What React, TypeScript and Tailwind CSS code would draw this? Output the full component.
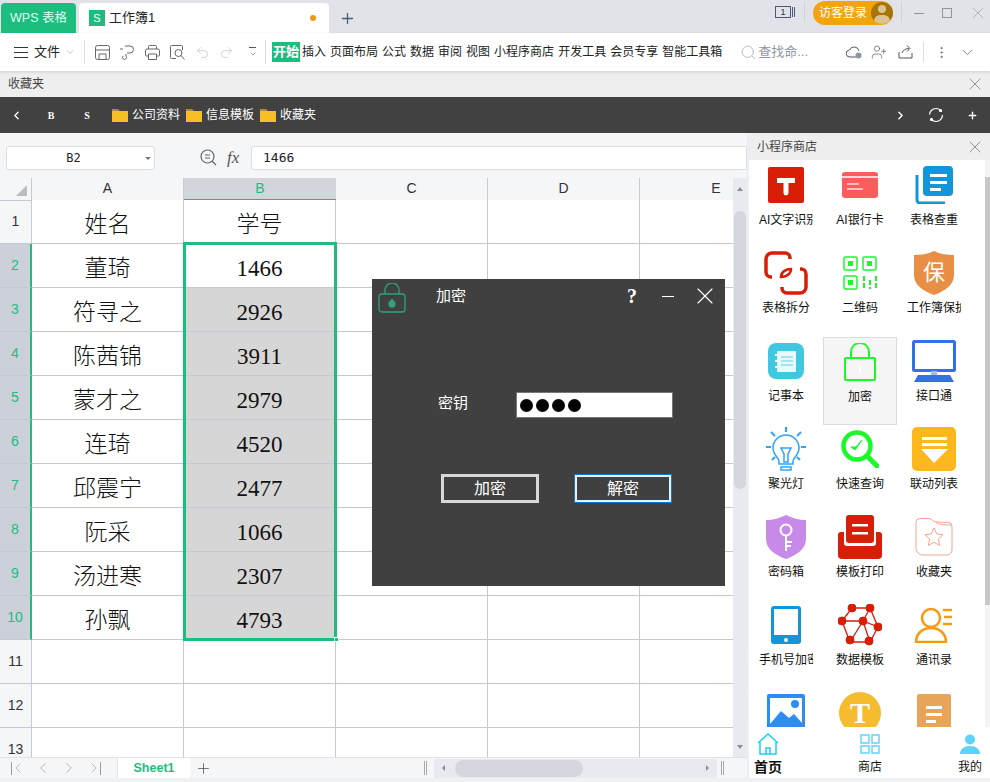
import { ChevronDown, ChevronLeft, ChevronRight, Plus, Redo2, Search, Undo2, X, MoreVertical, UserPlus } from 'lucide-react';

const ribbonTabs = ['插入', '页面布局', '公式', '数据', '审阅', '视图', '小程序商店', '开发工具', '会员专享', '智能工具箱'];

const students = [
  ['姓名', '学号'],
  ['董琦', '1466'],
  ['符寻之', '2926'],
  ['陈茜锦', '3911'],
  ['蒙才之', '2979'],
  ['连琦', '4520'],
  ['邱震宁', '2477'],
  ['阮采', '1066'],
  ['汤进寒', '2307'],
  ['孙飘', '4793'],
  ['', ''],
  ['', ''],
  ['', ''],
];

const Folder = () => (
  <svg width="16" height="14" viewBox="0 0 16 14">
    <path d="M0 1h6l2 2h8v2H0z" fill="#a88c3a" />
    <path d="M0 3h16v11H0z" fill="#f6bf26" />
  </svg>
);

const apps: { label: string; icon: React.ReactNode }[] = [
  {
    label: 'AI文字识别',
    icon: (
      <svg width="36" height="36" viewBox="0 0 36 36">
        <rect width="36" height="36" rx="2" fill="#d81e06" />
        <path d="M9 11h18v5h-6.500v10a2.500 2.500 0 0 1-5 0V16H9z" fill="#fff" />
      </svg>
    ),
  },
  {
    label: 'AI银行卡',
    icon: (
      <svg width="36" height="28" viewBox="0 0 36 28">
        <rect width="36" height="26" y="1" rx="3" fill="#fd5c5c" />
        <path d="M0 6h36" stroke="#fff" strokeWidth="1.500" />
        <path d="M5 13h12M5 18h16" stroke="#fff" strokeWidth="1.500" opacity=".8" />
      </svg>
    ),
  },
  {
    label: '表格查重',
    icon: (
      <svg width="38" height="38" viewBox="0 0 38 38">
        <path d="M2 9v25a3 3 0 0 0 3 3h25" fill="none" stroke="#1296db" strokeWidth="3" />
        <rect x="8" y="0" width="30" height="30" rx="4" fill="#1296db" />
        <path d="M15 8h17v3H15zM15 15h17v3H15zM15 22h11v3H15z" fill="#fff" />
      </svg>
    ),
  },
  {
    label: '表格拆分',
    icon: (
      <svg width="44" height="44" viewBox="0 0 44 44" fill="none" stroke="#d81e06" strokeWidth="3.500">
        <path d="M26 8V7a5 5 0 0 0-5-5H8a6 6 0 0 0-6 6v13a5 5 0 0 0 5 5h1" />
        <path d="M18 36v1a5 5 0 0 0 5 5h13a6 6 0 0 0 6-6V23a5 5 0 0 0-5-5h-1" />
        <path d="M17 26c0-5 5-8 10-8 0 5-5 8-10 8z" strokeWidth="2.500" />
      </svg>
    ),
  },
  {
    label: '二维码',
    icon: (
      <svg width="34" height="34" viewBox="0 0 34 34" fill="none" stroke="#1afa29" strokeWidth="1.500">
        <rect x="1" y="1" width="13" height="13" rx="1.500" />
        <rect x="20" y="1" width="13" height="13" rx="1.500" />
        <rect x="1" y="20" width="13" height="13" rx="1.500" />
        <path d="M5 5h5v5H5zM24 5h5v5h-5zM5 24h5v5H5z" fill="#1afa29" stroke="none" />
        <path d="M21 20v13M27 24v9M33 20v13" strokeWidth="2" strokeDasharray="5 2" />
      </svg>
    ),
  },
  {
    label: '工作簿保护',
    icon: (
      <div className="relative flex h-[44px] w-[40px] items-center justify-center">
        <svg width="40" height="44" viewBox="0 0 40 44" className="absolute inset-0">
          <path d="M20 0c6 3 13 4 20 4v20c0 10-9 16-20 20C9 40 0 34 0 24V4c7 0 14-1 20-4z" fill="#e98f45" />
        </svg>
        <span className="relative text-[22px] leading-none text-[#fff]">保</span>
      </div>
    ),
  },
  {
    label: '记事本',
    icon: (
      <svg width="36" height="36" viewBox="0 0 36 36">
        <rect width="36" height="36" rx="8" fill="#3fc8e0" />
        <rect x="9" y="8" width="19" height="21" rx="1" fill="#e9fafd" />
        <path d="M7 12h3M7 18h3M7 24h3" stroke="#e9fafd" strokeWidth="2" />
        <path d="M13 14h12M13 18h12M13 22h12" stroke="#8fdeeb" strokeWidth="1.500" />
      </svg>
    ),
  },
  {
    label: '加密',
    icon: (
      <svg width="32" height="38" viewBox="0 0 32 38" fill="none" stroke="#1afa29" strokeWidth="2">
        <path d="M7 14V9a9 9 0 0 1 18 0v5" />
        <rect x="1" y="15" width="30" height="22" rx="1" />
        <path d="M16 22v7" stroke="#fff" />
      </svg>
    ),
  },
  {
    label: '接口通',
    icon: (
      <svg width="44" height="42" viewBox="0 0 44 42">
        <rect x="1.500" y="1.500" width="41" height="29" rx="1" fill="#fff" stroke="#3370e8" strokeWidth="3" />
        <path d="M19 31h6v4h-6z" fill="#9fbdf2" />
        <path d="M6 35h32l4 7H2z" fill="#3370e8" />
      </svg>
    ),
  },
  {
    label: '聚光灯',
    icon: (
      <svg width="40" height="44" viewBox="0 0 40 44" fill="none" stroke="#2aa5fb" strokeWidth="1.500">
        <path d="M13 37v-3c0-3-6-6-6-13a13 13 0 0 1 26 0c0 7-6 10-6 13v3z" />
        <path d="M15 21h10l-3 6v8h-4v-8z" strokeWidth="1.500" />
        <path d="M15 40h10v3H15z" />
        <path d="M20 0v5M5 5l4 4M35 5l-4 4M0 20h5M35 20h5M6 33l3-3M34 33l-3-3" strokeWidth="2" />
      </svg>
    ),
  },
  {
    label: '快速查询',
    icon: (
      <svg width="38" height="38" viewBox="0 0 38 38" fill="none" stroke="#1afa29">
        <circle cx="16" cy="16" r="13.500" strokeWidth="4.500" />
        <path d="M27 27l9 9" strokeWidth="5" strokeLinecap="round" />
        <path d="M10 17l4 3 7-10-6 7z" strokeWidth="1" fill="#1afa29" />
      </svg>
    ),
  },
  {
    label: '联动列表',
    icon: (
      <svg width="44" height="44" viewBox="0 0 44 44">
        <rect width="44" height="44" rx="5" fill="#fdb81e" />
        <path d="M10 10h25v3H10zM10 16h25v3H10z" fill="#fff" />
        <path d="M9 22h27L22 36z" fill="#fff" />
      </svg>
    ),
  },
  {
    label: '密码箱',
    icon: (
      <svg width="40" height="44" viewBox="0 0 40 44">
        <path d="M20 0c6 3 13 5 20 5v19c0 10-9 16-20 20C9 40 0 34 0 24V5c7 0 14-2 20-5z" fill="#c88ae8" />
        <circle cx="20" cy="15" r="5.500" fill="none" stroke="#fff" strokeWidth="2" />
        <path d="M20 21v15M20 27h6M20 31h5" stroke="#fff" strokeWidth="2" fill="none" />
      </svg>
    ),
  },
  {
    label: '模板打印',
    icon: (
      <svg width="44" height="44" viewBox="0 0 44 44">
        <path d="M3 17h3v11a3 3 0 0 0 3 3h26a3 3 0 0 0 3-3V17h3a3 3 0 0 1 3 3v20a4 4 0 0 1-4 4H4a4 4 0 0 1-4-4V20a3 3 0 0 1 3-3z" fill="#d81e06" />
        <rect x="8" y="0" width="28" height="28" rx="3" fill="#d81e06" />
        <path d="M14 9h16v2.500H14zM14 17h16v2.500H14z" fill="#fff" />
      </svg>
    ),
  },
  {
    label: '收藏夹',
    icon: (
      <svg width="38" height="38" viewBox="0 0 38 38" fill="none" stroke="#f59a85" strokeWidth="0.900">
        <path d="M5 .500h9c3 0 3 3 7 3.500l12 .500a4 4 0 0 1 4 4V32a5 5 0 0 1-5 5H8a7 7 0 0 1-7-7V4.500a4 4 0 0 1 4-4z" />
        <path d="M21 4c3 3 8 3 16 3" />
        <path d="M19 10l2.800 6 6.200.700-4.600 4.300 1.300 6.500-5.700-3.300-5.700 3.300 1.300-6.500L10 16.700l6.200-.700z" />
      </svg>
    ),
  },
  {
    label: '手机号加密',
    icon: (
      <svg width="30" height="38" viewBox="0 0 30 38">
        <rect width="30" height="38" rx="3" fill="#1296db" />
        <rect x="3" y="3" width="24" height="26" fill="#fff" />
        <circle cx="15" cy="34" r="2" fill="#fff" />
      </svg>
    ),
  },
  {
    label: '数据模板',
    icon: (
      <svg width="44" height="42" viewBox="0 0 44 42" fill="#d81e06" stroke="#d81e06">
        <path d="M14 4l18 0 8 19-8 15-20 0-8-21zM4 17l21 0 15 6M14 4l-10 13M32 4l-7 13M25 17l7 21M12 38L25 17" fill="none" strokeWidth="1.300" />
        <circle cx="14" cy="4" r="4" />
        <circle cx="32" cy="4" r="4" />
        <circle cx="4" cy="17" r="4" />
        <circle cx="25" cy="17" r="4" />
        <circle cx="40" cy="23" r="4" />
        <circle cx="12" cy="36" r="4" />
        <circle cx="31" cy="37" r="4" />
      </svg>
    ),
  },
  {
    label: '通讯录',
    icon: (
      <svg width="38" height="36" viewBox="0 0 38 36" fill="none" stroke="#f79a0e" strokeWidth="2.500">
        <circle cx="16" cy="11" r="9" />
        <path d="M1 35c0-8 6-14 15-14s15 6 15 14z" />
        <path d="M28 3h9M29 10h8M28 17h9" />
      </svg>
    ),
  },
  {
    label: '图片',
    icon: (
      <svg width="38" height="38" viewBox="0 0 38 38">
        <rect width="38" height="38" rx="2" fill="#2f8cf0" />
        <rect x="3" y="4" width="32" height="28" fill="#fff" />
        <path d="M3 30l11-13 8 7 5-4 8 9v9H3z" fill="#2f8cf0" />
        <circle cx="28" cy="10" r="4" fill="#2f8cf0" />
      </svg>
    ),
  },
  {
    label: '文字',
    icon: (
      <div className="flex h-[42px] w-[42px] items-center justify-center rounded-full bg-[#f5bd2e] font-['Liberation_Serif',serif] text-[30px] leading-none font-bold text-[#fff]">
        T
      </div>
    ),
  },
  {
    label: '模板',
    icon: (
      <svg width="34" height="38" viewBox="0 0 34 38">
        <rect width="34" height="38" rx="2" fill="#e8a55a" />
        <path d="M9 12h16v3H9zM9 19h16v3H9zM9 26h10v3H9z" fill="#fff" />
      </svg>
    ),
  },
];

const Dialog = () => (
  <div className="absolute top-[279px] left-[372px] flex h-[307px] w-[353px] flex-col bg-[#404040] text-[#fff]">
    <div className="flex h-[34px] items-center">
      <svg width="28" height="30" viewBox="0 0 28 30" fill="none" stroke="#2fa27a" strokeWidth="1.300" className="mt-[3px] ml-[6px]">
        <path d="M7 11V7a7 7 0 0 1 14 0v4" />
        <rect x="1" y="11" width="26" height="18" rx="3" />
        <circle cx="14" cy="21" r="3" fill="#2fa27a" />
        <path d="M14 16v5" strokeWidth="2" />
      </svg>
      <span className="ml-[30px] w-[30px] text-[15px]">加密</span>
      <span className="ml-[161px] w-[10px] font-['Liberation_Serif',serif] text-[20px] font-bold">?</span>
      <span className="ml-[25px] h-px w-[12px] bg-[#fff]" />
      <X size={28} strokeWidth={1} className="ml-[17px]" />
    </div>
    <div className="mt-[79px] ml-[66px] flex h-[26px] items-center">
      <span className="-mt-[4px] w-[78px] text-[15px]">密钥</span>
      <div className="flex h-[26px] w-[157px] items-center gap-[3px] border border-[#777] bg-[#fff] pl-[3px]">
        <span className="size-[13px] rounded-full bg-[#000]" />
        <span className="size-[13px] rounded-full bg-[#000]" />
        <span className="size-[13px] rounded-full bg-[#000]" />
        <span className="size-[13px] rounded-full bg-[#000]" />
      </div>
    </div>
    <div className="mt-[56px] ml-[69px] flex gap-[35px] text-[16px]">
      <div className="flex h-[29px] w-[98px] items-center justify-center border-[3px] border-[#d8d8d8]">加密</div>
      <div className="flex h-[29px] w-[98px] items-center justify-center border-[3px] border-[#e8f2fb] outline-1 -outline-offset-1 outline-[#0a78d7]">解密</div>
    </div>
  </div>
);

const Sheet = () => (
  <div className="flex min-w-0 flex-1 flex-col bg-[#f5f6f8]">
    <div className="flex h-[45px] items-center pt-[4px]">
      <div className="relative ml-[6px] flex h-[24px] w-[149px] items-center justify-center rounded-[3px] border border-[#dcdee3] bg-[#fff] pr-[14px] font-['DejaVu_Sans_Mono',monospace] text-[12px] text-[#222]">
        B2
        <span className="absolute top-[10px] right-[3px] border-x-[3px] border-t-[3px] border-x-transparent border-t-[#777]" />
      </div>
      <svg width="17" height="17" viewBox="0 0 17 17" fill="none" stroke="#666" strokeWidth="1.200" className="ml-[45px]">
        <circle cx="7.500" cy="7.500" r="6.500" />
        <path d="M12 12l4 4M5 6h5M5 9h5" />
      </svg>
      <span className="ml-[10px] w-[18px] font-['Liberation_Serif',serif] text-[17px] text-[#555] italic">fx</span>
      <div className="ml-[6px] flex h-[24px] flex-1 items-center rounded-l-[3px] border border-[#dcdee3] bg-[#fff] pl-[11px] font-['DejaVu_Sans_Mono',monospace] text-[13px] text-[#222]">
        1466
      </div>
    </div>
    <div className="flex min-h-0 flex-1">
      <div className="min-w-0 flex-1 overflow-hidden">
        <div className="grid h-[22px] grid-cols-[32px_152px_152px_152px_152px_152px] text-center text-[14px] text-[#333]">
          <div className="relative border-r border-b border-[#c5c9d6]">
            <span className="absolute right-[4px] bottom-[4px] border-b-[11px] border-l-[11px] border-b-[#bdbdbd] border-l-transparent" />
          </div>
          <div className="border-r border-b border-[#c5c9d6]">A</div>
          <div className="border-b-2 border-[#1dbd80] bg-[#d2d5dc] text-[#1dbd80]">B</div>
          <div className="border-r border-b border-[#c5c9d6]">C</div>
          <div className="border-r border-b border-[#c5c9d6]">D</div>
          <div className="border-b border-[#c5c9d6]">E</div>
        </div>
        <div className="relative">
          {students.map(([name, id], i) => (
            <div key={i} className="grid h-[44px] grid-cols-[32px_152px_152px_152px_152px_152px]">
              <div
                className={`flex items-center justify-center border-b border-[#c5c9d6] text-[14px] ${
                  i >= 1 && i <= 9 ? 'border-r-2 border-r-[#1dbd80] bg-[#ccd0d8] text-[#1dbd80]' : 'border-r text-[#333]'
                }`}
              >
                {i + 1}
              </div>
              <div className="flex items-center justify-center border-r border-b border-[#c5c9d6] bg-[#fff] pt-[8px] font-['Liberation_Serif','Noto_Sans_CJK_SC',serif] text-[23px] font-light text-[#111]">
                {name}
              </div>
              <div
                className={`flex items-center justify-center border-r border-b border-[#c5c9d6] pt-[8px] font-['Liberation_Serif','Noto_Sans_CJK_SC',serif] text-[23px] font-light text-[#111] ${
                  i >= 2 && i <= 9 ? 'bg-[#d6d6d6]' : 'bg-[#fff]'
                }`}
              >
                {id}
              </div>
              <div className="border-r border-b border-[#c5c9d6] bg-[#fff]" />
              <div className="border-r border-b border-[#c5c9d6] bg-[#fff]" />
              <div className="border-b border-[#c5c9d6] bg-[#fff]" />
            </div>
          ))}
          <div className="absolute top-[42px] left-[183px] h-[399px] w-[154px] border-[3px] border-[#1dbd80]" />
          <div className="absolute top-[437px] left-[334px] size-[5px] border border-[#fff] bg-[#1dbd80]" />
        </div>
      </div>
      <div className="flex w-[14px] flex-col items-center bg-[#e9eaf0]">
        <span className="mt-[9px] border-x-[3px] border-b-[4px] border-x-transparent border-b-[#8b8f9c]" />
        <div className="mt-[20px] h-[278px] w-[12px] rounded-full bg-[#d5d7de]" />
        <span className="mt-auto mb-[8px] border-x-[3px] border-t-[4px] border-x-transparent border-t-[#8b8f9c]" />
      </div>
    </div>
    <div className="flex h-[21px] items-center border-t border-[#e0e2e8] text-[#9a9da8]">
      <div className="flex w-[118px] items-center border-r border-[#e0e2e8] pl-[11px]">
        <span className="h-[13px] w-px bg-[#9a9da8]" />
        <ChevronLeft size={16} strokeWidth={1} className="-ml-[2px]" />
        <ChevronLeft size={18} strokeWidth={1} className="ml-[8px]" />
        <ChevronRight size={18} strokeWidth={1} className="ml-[8px]" />
        <ChevronRight size={16} strokeWidth={1} className="ml-[8px]" />
        <span className="-ml-[2px] h-[13px] w-px bg-[#9a9da8]" />
      </div>
      <div className="flex h-full w-[72px] items-center justify-center bg-[#fff] text-[12.500px] font-bold text-[#1dbd80]">Sheet1</div>
      <Plus size={17} strokeWidth={1} className="ml-[5px] text-[#444]" />
      <div className="ml-[212px] h-[14px] w-[3px] border-x border-[#aaa]" />
      <div className="ml-[7px] flex h-[19px] w-[283px] items-center bg-[#e9eaf0] pl-[8px]">
        <span className="border-y-[3px] border-r-[3px] border-y-transparent border-r-[#8b8f9c]" />
        <div className="ml-[10px] h-[17px] w-[128px] rounded-full bg-[#d5d7de]" />
        <span className="mr-[8px] ml-auto border-y-[3px] border-l-[3px] border-y-transparent border-l-[#8b8f9c]" />
      </div>
      <div className="ml-[4px] h-[14px] w-[3px] border-x border-[#aaa]" />
    </div>
  </div>
);

const AppPanel = () => (
  <div className="flex w-[243px] flex-col border-l-2 border-[#eceef2] bg-[#fff] text-[12px] text-[#111]">
    <div className="flex h-[27px] items-center justify-between bg-[#eeeeee] pr-[5px] pl-[8px] text-[#444]">
      <span>小程序商店</span>
      <X size={20} strokeWidth={0.700} className="text-[#555]" />
    </div>
    <div className="flex min-h-0 flex-1">
      <div className="grid flex-1 grid-cols-[74px_74px_74px] auto-rows-[88px] overflow-hidden pt-[1px]">
        {apps.map(app => (
          <div
            key={app.label}
            className={`flex flex-col items-center ${app.label === '加密' ? 'border border-[#dcdcdc] bg-[#f5f5f5]' : ''}`}
          >
            <div className="flex h-[47px] w-full items-center justify-center">{app.icon}</div>
            <div className="mt-[4px] w-[54px] overflow-hidden text-center leading-[16px] whitespace-nowrap">{app.label}</div>
          </div>
        ))}
      </div>
      <div className="w-[5px] bg-[#f4f4f4]">
        <div className="mt-[17px] h-[428px] bg-[#c8c8c8]" />
      </div>
    </div>
    <div className="flex h-[51px] justify-between bg-[#fff] pr-[8px] pl-[5px]">
      <div className="flex w-[28px] flex-col items-center">
        <svg width="22" height="22" viewBox="0 0 22 22" fill="none" stroke="#14d4f4" strokeWidth="1.500" className="mt-[6px]">
          <path d="M1 10L11 1l10 9M3 9v12h16V9M9 21v-6h4v6" />
        </svg>
        <span className="mt-[3px] text-[14px] leading-[18px] font-bold">首页</span>
      </div>
      <div className="flex flex-col items-center">
        <svg width="20" height="20" viewBox="0 0 20 20" fill="none" stroke="#5cd3fb" strokeWidth="1.400" className="mt-[7px]">
          <path d="M1 1h8v8H1zM12 1h7v8h-7zM1 12h8v7H1zM12 12h7v7h-7z" />
        </svg>
        <span className="mt-[4px] text-[12px] leading-[18px]">商店</span>
      </div>
      <div className="flex flex-col items-center">
        <svg width="20" height="20" viewBox="0 0 20 20" fill="#5cd3fb" className="mt-[7px]">
          <circle cx="10" cy="5.500" r="5" />
          <path d="M0 20c0-5 4-8 10-8s10 3 10 8z" />
        </svg>
        <span className="mt-[4px] text-[12px] leading-[18px]">我的</span>
      </div>
    </div>
  </div>
);

export default function App() {
  return (
    <div className="relative flex h-[782px] w-[990px] flex-col overflow-hidden bg-[#f0f1f3] font-['Liberation_Sans','Noto_Sans_CJK_SC',sans-serif]">
      {/* title bar */}
      <div className="flex h-[33px] items-end bg-[#e1e3e8] pl-[1px]">
        <div className="flex h-[30px] w-[75px] items-center justify-center rounded-t-[4px] bg-[#1dbd80] text-[12.500px] text-[#dffff0]">WPS 表格</div>
        <div className="ml-[3px] flex h-[30px] w-[250px] items-center rounded-t-[4px] bg-[#fff] pr-[13px] pl-[10px] text-[13px] text-[#222]">
          <span className="flex size-[16px] items-center justify-center bg-[#1dbd80] text-[11px] leading-none text-[#fff]">S</span>
          <span className="ml-[4px]">工作簿1</span>
          <span className="ml-auto size-[6px] rounded-full bg-[#ee9a0b]" />
        </div>
        <Plus size={17} strokeWidth={1.800} className="mb-[6px] ml-[10px] text-[#4d5a78]" />
        <div className="mb-[7px] ml-[419px] flex items-center self-start pt-[6px]">
          <span className="flex h-[12px] w-[16px] items-center justify-center border border-[#4d5a78] text-[9px] leading-none text-[#333]">1</span>
          <span className="ml-[1px] h-[10px] w-[3px] border-x border-[#4d5a78]" />
        </div>
        <div className="mt-[2px] ml-[9px] h-[20px] w-px self-start bg-[#cfd2d8]" />
        <div className="mt-[1px] ml-[8px] flex h-[24px] w-[80px] items-center self-start rounded-full bg-[#f3a40c] pl-[6px] text-[12px] text-[#fff]">
          访客登录
          <span className="relative ml-[4px] size-[22px] overflow-hidden rounded-full bg-[#a87408]">
            <span className="absolute top-[3px] left-[7px] size-[8px] rounded-full bg-[#dcc490]" />
            <span className="absolute top-[13px] left-[3px] h-[12px] w-[16px] rounded-full bg-[#dcc490]" />
          </span>
        </div>
        <div className="mt-[2px] ml-[8px] h-[20px] w-px self-start bg-[#cfd2d8]" />
        <div className="flex h-[26px] flex-1 items-center self-start text-[#8f95a3]">
          <span className="ml-[12px] h-px w-[10px] bg-[#8f95a3]" />
          <span className="ml-[18px] size-[10px] border border-[#8f95a3]" />
          <X size={20} strokeWidth={0.700} className="ml-[16px]" />
        </div>
      </div>

      {/* ribbon */}
      <div className="z-10 flex h-[38px] items-center bg-[#fff] text-[12px] text-[#222] shadow-[0_1px_3px_#00000022]">
        <div className="ml-[14px] flex h-[11px] w-[14px] flex-col justify-between">
          <span className="h-px bg-[#333]" />
          <span className="h-px bg-[#333]" />
          <span className="h-px bg-[#333]" />
        </div>
        <span className="ml-[6px] text-[13px]">文件</span>
        <ChevronDown size={12} strokeWidth={1} className="ml-[4px] text-[#888]" />
        <div className="ml-[8px] h-[24px] w-px bg-[#ddd]" />
        <svg width="15" height="15" viewBox="0 0 15 15" fill="none" stroke="#666" className="ml-[10px]">
          <path d="M2.500.500h10a2 2 0 0 1 2 2v10a2 2 0 0 1-2 2h-10a2 2 0 0 1-2-2v-10a2 2 0 0 1 2-2zM.500 5h14M4 14.500V9h7v5.500" />
        </svg>
        <svg width="15" height="15" viewBox="0 0 15 15" fill="none" stroke="#666" className="ml-[10px]">
          <path d="M5 1h5a3.500 3.500 0 0 1 0 7H7M0 4h3M6 9v2a2 2 0 1 1-3 0" />
        </svg>
        <svg width="15" height="15" viewBox="0 0 15 15" fill="none" stroke="#666" className="ml-[10px]">
          <path d="M3.500 4V1.500a1 1 0 0 1 1-1h6a1 1 0 0 1 1 1V4M3 11H1.500a1 1 0 0 1-1-1V5.500a1.500 1.500 0 0 1 1.500-1.500h11a1.500 1.500 0 0 1 1.500 1.500V10a1 1 0 0 1-1 1H12M3.500 9h8v5.500h-8z" />
        </svg>
        <svg width="15" height="15" viewBox="0 0 15 15" fill="none" stroke="#666" className="ml-[10px]">
          <path d="M6 13.500H1.500a1 1 0 0 1-1-1v-11a1 1 0 0 1 1-1h10a1 1 0 0 1 1 1V5" />
          <circle cx="8.500" cy="8" r="3.500" />
          <path d="M11 10.500l3.500 4" />
        </svg>
        <Undo2 size={15} strokeWidth={1} className="ml-[10px] text-[#bbb]" />
        <Redo2 size={15} strokeWidth={1} className="ml-[9px] text-[#bbb]" />
        <div className="ml-[15px] flex w-[7px] flex-col items-center gap-[2px]">
          <span className="h-px w-[7px] bg-[#555]" />
          <ChevronDown size={8} strokeWidth={1.500} className="text-[#555]" />
        </div>
        <div className="ml-[9px] h-[24px] w-px bg-[#ddd]" />
        <span className="ml-[6px] flex h-[20px] w-[28px] items-center justify-center bg-[#1dbd80] text-[13px] font-bold text-[#fff]">开始</span>
        <div className="ml-[2px] flex gap-[4px]">
          {ribbonTabs.map(tab => (
            <span key={tab}>{tab}</span>
          ))}
        </div>
        <Search size={17} strokeWidth={1.100} className="ml-[18px] text-[#a5adbd]" />
        <span className="ml-[1px] text-[13px] text-[#8f95a3]">查找命...</span>
        <svg width="16" height="14" viewBox="0 0 16 14" fill="none" stroke="#555" className="ml-[38px]">
          <path d="M10 12H4a3.500 3.500 0 0 1-.500-7 5 5 0 0 1 9.500 1" />
          <circle cx="12.500" cy="10.500" r="3" fill="#8f95a3" stroke="none" />
        </svg>
        <UserPlus size={16} strokeWidth={1} className="ml-[9px] text-[#555]" />
        <svg width="15" height="14" viewBox="0 0 15 14" fill="none" stroke="#555" className="ml-[11px]">
          <path d="M1 7v6h13V8M4 8c1-3 4-4.500 7-4.500M9 .500l3 3-3 3" />
        </svg>
        <div className="ml-[10px] h-[20px] w-px bg-[#ddd]" />
        <MoreVertical size={15} strokeWidth={1.200} className="ml-[10px] text-[#555]" />
        <ChevronDown size={17} strokeWidth={1} className="ml-[10px] text-[#555]" />
      </div>

      {/* favorites label */}
      <div className="flex h-[26px] items-center justify-between bg-[#eeeeee] pr-[5px] pl-[8px] text-[12px] text-[#444]">
        <span>收藏夹</span>
        <X size={20} strokeWidth={0.700} className="text-[#555]" />
      </div>

      {/* favorites bar */}
      <div className="flex h-[36px] items-center bg-[#414141] text-[12px] text-[#fff]">
        <ChevronLeft size={13} strokeWidth={2.500} className="ml-[10px]" />
        <span className="ml-[22px] w-[12px] text-center font-['Liberation_Serif',serif] text-[10px] font-bold">B</span>
        <span className="ml-[24px] w-[12px] text-center font-['Liberation_Serif',serif] text-[10px] font-bold">S</span>
        <div className="ml-[19px] flex items-center gap-[4px]">
          <Folder />
          <span>公司资料</span>
        </div>
        <div className="ml-[6px] flex items-center gap-[4px]">
          <Folder />
          <span>信息模板</span>
        </div>
        <div className="ml-[6px] flex items-center gap-[4px]">
          <Folder />
          <span>收藏夹</span>
        </div>
        <ChevronRight size={13} strokeWidth={2.500} className="ml-[578px]" />
        <svg width="16" height="16" viewBox="0 0 16 16" fill="none" stroke="#fff" strokeWidth="1.200" className="ml-[21px]">
          <circle cx="8" cy="8" r="6.500" strokeDasharray="16 4.400" />
          <circle cx="3.500" cy="12.500" r="1" fill="#fff" />
          <circle cx="12.500" cy="3.500" r="1" fill="#fff" />
        </svg>
        <Plus size={11} strokeWidth={3} className="ml-[23px]" />
      </div>

      {/* workspace */}
      <div className="flex h-[645px]">
        <Sheet />
        <AppPanel />
      </div>
      <Dialog />
    </div>
  );
}
